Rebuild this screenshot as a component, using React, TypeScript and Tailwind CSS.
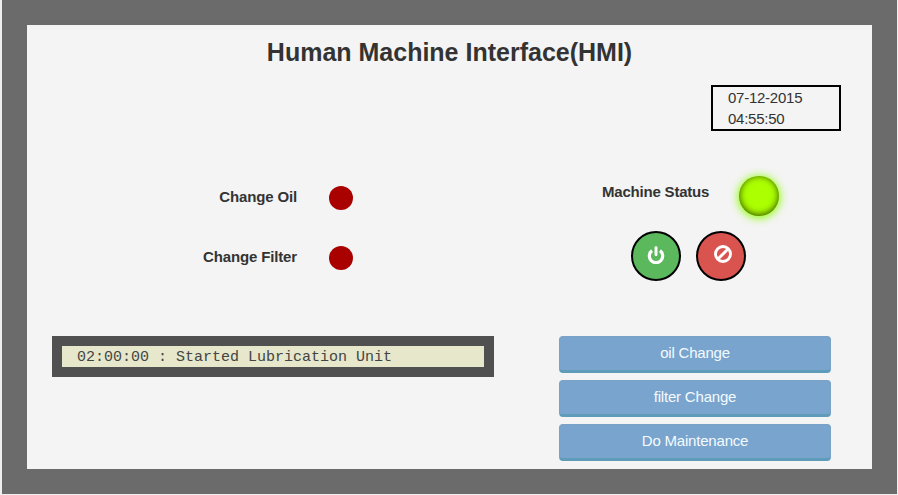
import type { ReactNode } from 'react';

const sans = "font-['Liberation_Sans',Arial,sans-serif]";

function PowerIcon() {
  return (
    <svg width="18" height="18" viewBox="0 0 18 18" fill="none" stroke="#fff" aria-hidden="true">
      <path d="M5 4.6A6.7 6.7 0 1 0 13 4.6" strokeWidth="3.2" />
      <path d="M9 1.6V8.8" strokeWidth="2.9" strokeLinecap="round" />
    </svg>
  );
}

function BanIcon() {
  return (
    <svg width="18" height="18" viewBox="0 0 18 18" fill="none" stroke="#fff" aria-hidden="true">
      <circle cx="9" cy="9" r="7.5" strokeWidth="2.9" />
      <path d="M4 14L14 4" strokeWidth="2.9" />
    </svg>
  );
}

function Indicator({ label }: { label: string }) {
  return (
    <div className="flex h-6 items-start justify-end gap-8">
      <span className="text-[15px] leading-[22px] font-bold tracking-[-0.15px]">{label}</span>
      <span className="size-6 rounded-full bg-[#a90000]" />
    </div>
  );
}

function ActionButton({ children }: { children: ReactNode }) {
  return (
    <button
      type="button"
      className="h-[37px] w-full rounded-[4px] border border-b-[3px] border-[#7aa2c6] border-b-[#5f9cb9] bg-[#79a4cd] pb-[3px] text-[15px] leading-[21px] tracking-[-0.2px] text-[#f4fbff]"
    >
      {children}
    </button>
  );
}

export default function App() {
  return (
    <div className={`h-[495px] w-[898px] overflow-hidden bg-[#eeeeee] pl-[2px] text-[#333] ${sans}`}>
      <main className="h-[494px] w-[895px] border-[25px] border-[#6b6b6b] bg-[#f4f4f4]">
        <h1 className="pt-[13px] text-center text-[25px] leading-[28px] font-bold">
          Human Machine Interface(HMI)
        </h1>

        <div className="mt-[19px] mr-[31px] ml-auto h-[46px] w-[130px] border-2 border-black pl-[15px] text-[15px] leading-[21px] tracking-[-0.25px]">
          <div>07-12-2015</div>
          <div>04:55:50</div>
        </div>

        <div className="mt-[45px] flex h-[160px] justify-between">
          <section className="flex w-[326px] flex-col gap-9 pt-[10px]">
            <Indicator label="Change Oil" />
            <Indicator label="Change Filter" />
          </section>

          <section className="w-[270px]">
            <div className="flex items-start gap-[30px]">
              <span className="w-[107px] pt-[5px] text-[15px] leading-[22px] font-bold tracking-[-0.2px] whitespace-nowrap">
                Machine Status
              </span>
              <span className="size-10 rounded-full bg-[#abff00] shadow-[inset_0_-1px_7px_0_#304701,0_1px_8px_1px_#89ff00]" />
            </div>
            <div className="mt-[15px] flex gap-[15px] pl-[29px]">
              <button
                type="button"
                aria-label="Start machine"
                className="flex size-[50px] items-center justify-center rounded-full border-2 border-black bg-[#5cb85c] pb-[2px]"
              >
                <PowerIcon />
              </button>
              <button
                type="button"
                aria-label="Stop machine"
                className="flex size-[50px] items-center justify-center rounded-full border-2 border-black bg-[#d9534f] pb-[4px] pl-[4px]"
              >
                <BanIcon />
              </button>
            </div>
          </section>
        </div>

        <div className="flex items-start justify-between pr-[41px] pl-[25px]">
          <div className="h-[41px] w-[442px] border-10 border-[#505050] bg-[#e6e7cb] pl-[15px] font-['Liberation_Mono','Courier_New',monospace] text-[15px] leading-[23px] whitespace-pre text-[#444]">
            02:00:00 : Started Lubrication Unit
          </div>
          <div className="flex w-[272px] flex-col gap-[7px]">
            <ActionButton>oil Change</ActionButton>
            <ActionButton>filter Change</ActionButton>
            <ActionButton>Do Maintenance</ActionButton>
          </div>
        </div>
      </main>
    </div>
  );
}
